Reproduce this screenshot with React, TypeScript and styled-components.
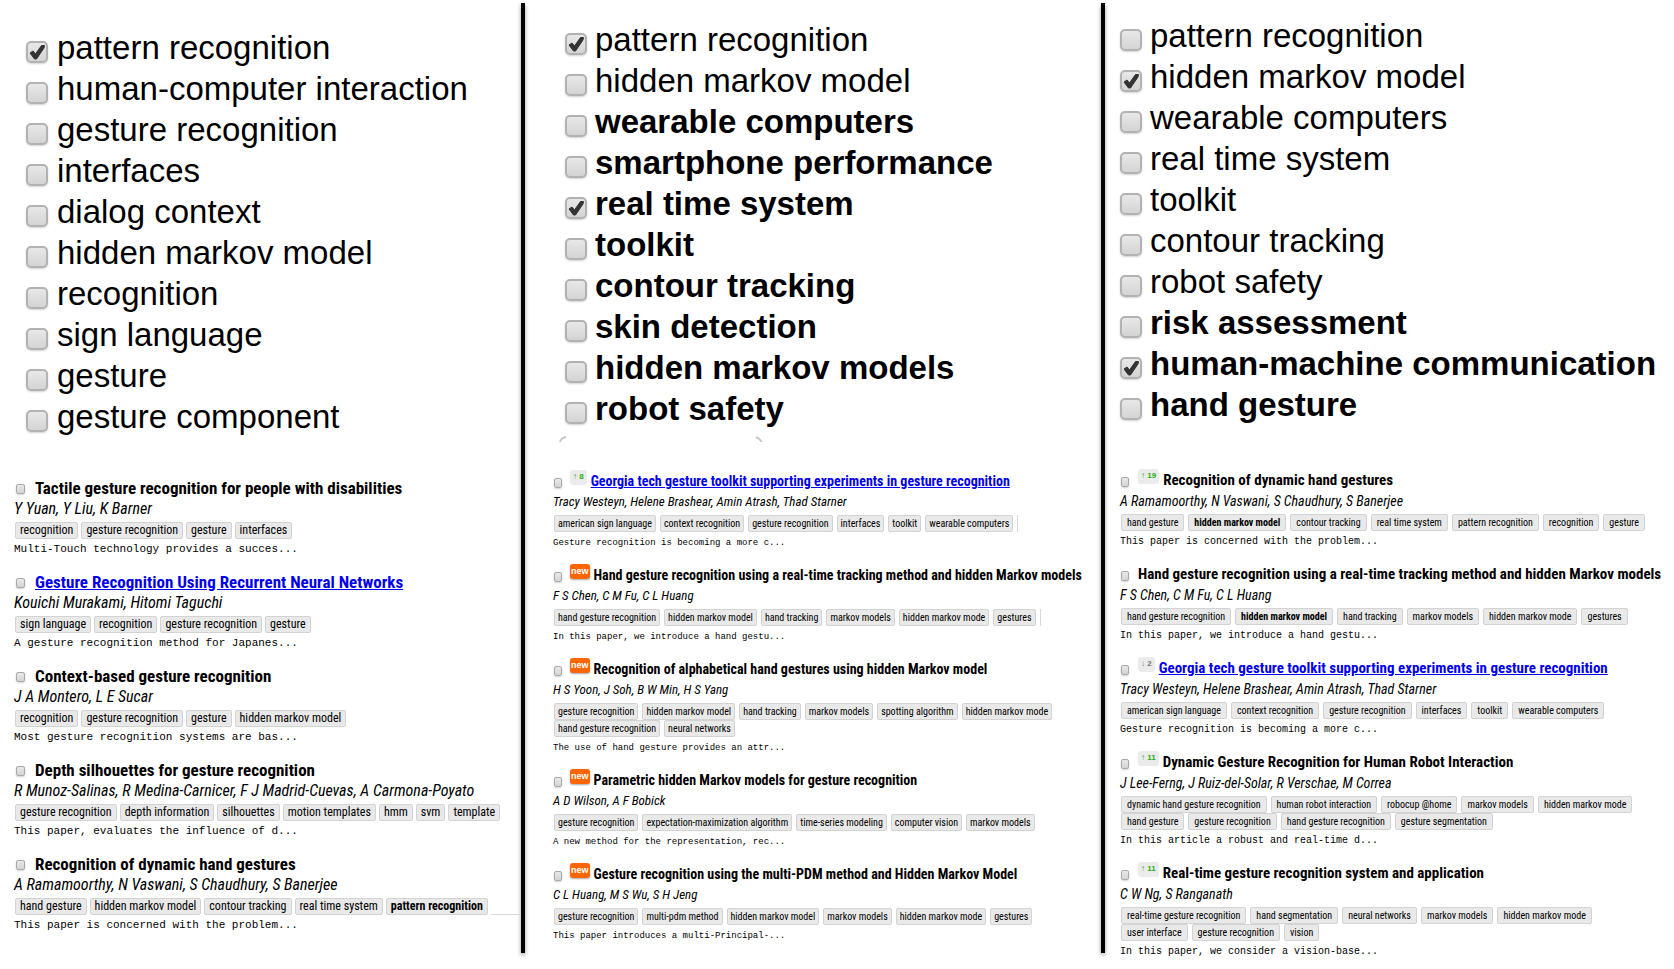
import React, { useId } from 'react';
import styled, { createGlobalStyle } from 'styled-components';

type Size = 's' | 'm' | 'l';
type Badge = { kind: 'new' | 'up' | 'down'; text: string };
type Topic = { name: string; checked?: boolean; fresh?: boolean };
type Paper = {
  title: string;
  link?: boolean;
  badge?: Badge;
  authors: string;
  tags: string[][];
  bold?: string;
  abstract: string;
  tail?: 'tick' | 'rule';
};
type ColumnData = { id: string; size: Size; topics: Topic[]; papers: Paper[]; marks?: boolean };

const metrics = {
  l: { top: 27, listLeft: 26, labelGap: 9, listGap: 39, left: 14, title: 17, titleRow: 23, authors: 16, tag: 12, tagPad: 4, tagGap: 3, mono: 11, monoTop: 1, boxGap: 10, box: 9 },
  s: { top: 19, listLeft: 40, labelGap: 8, listGap: 41, left: 28, title: 14, titleRow: 22, authors: 13, tag: 10, tagPad: 3, tagGap: 4, mono: 9, monoTop: 2, boxGap: 8, box: 8 },
  m: { top: 15, listLeft: 15, labelGap: 8, listGap: 44, left: 15, title: 15, titleRow: 22, authors: 14, tag: 10, tagPad: 5, tagGap: 4, mono: 10, monoTop: 2, boxGap: 9, box: 8 },
};

const GlobalStyle = createGlobalStyle`
  * { box-sizing: border-box; }
  body { margin: 0; background: #fff; color: #000; }
`;

const Page = styled.main`
  display: grid;
  grid-template-columns: minmax(0, 521fr) 4px minmax(0, 576fr) 4px minmax(0, 569fr);
  min-height: 100vh;
  font-family: 'Roboto Condensed', 'Liberation Sans', Arial, sans-serif;
`;

const Divider = styled.div`
  margin: 3px 0 16px;
  background: #000;
  box-shadow: 0 2px 4px rgba(0, 0, 0, 0.4);
`;

const Column = styled.section<{ $size: Size }>`
  position: relative;
  padding-top: ${(p) => metrics[p.$size].top}px;
`;

const TopicList = styled.ul<{ $size: Size }>`
  list-style: none;
  margin: 0;
  padding: 0 0 0 ${(p) => metrics[p.$size].listLeft}px;
  font-family: 'Liberation Sans', Arial, sans-serif;
  font-size: 33px;
  line-height: 41px;
`;

const TopicLabel = styled.label<{ $size: Size; $fresh?: boolean }>`
  display: flex;
  align-items: flex-end;
  gap: ${(p) => metrics[p.$size].labelGap}px;
  white-space: nowrap;
  font-weight: ${(p) => (p.$fresh ? 700 : 400)};
`;

const TickBox = styled.span`
  display: grid;
  width: 22px;
  height: 22px;
  margin-bottom: 5px;
  & > * { grid-area: 1 / 1; }
  & > svg { display: none; pointer-events: none; }
  & > input:checked + svg { display: block; }
`;

const Tick = styled.input<{ $w: number; $h: number }>`
  appearance: none;
  flex: none;
  width: ${(p) => p.$w}px;
  height: ${(p) => p.$h}px;
  margin: 0;
  border: ${(p) => (p.$w > 12 ? 2 : 1)}px solid ${(p) => (p.$w > 12 ? '#b2b2b2' : '#a9a9a9')};
  border-radius: ${(p) => (p.$w > 12 ? 5 : 2)}px;
  background: linear-gradient(#e8e8e8, #d4d4d4);
  box-shadow: 0 1px 2px rgba(0, 0, 0, 0.18);
`;

const SmallTick = styled(Tick)`
  margin-top: 3px;
`;

const Marks = styled.svg`
  position: absolute;
  left: 34px;
  top: 436px;
`;

const PaperList = styled.div<{ $size: Size }>`
  display: flex;
  flex-direction: column;
  gap: 12px;
  margin-top: ${(p) => metrics[p.$size].listGap}px;
  padding-left: ${(p) => metrics[p.$size].left}px;
`;

const TitleRow = styled.div<{ $size: Size }>`
  display: flex;
  align-items: center;
  height: ${(p) => metrics[p.$size].titleRow}px;
  padding-left: ${(p) => (p.$size === 'l' ? 2 : 1)}px;
`;

const Title = styled.h3<{ $size: Size }>`
  margin: 0 0 0 ${(p) => metrics[p.$size].boxGap}px;
  font-size: ${(p) => metrics[p.$size].title}px;
  line-height: 22px;
  font-weight: 700;
  white-space: nowrap;
  display: flex;
`;

const TitleLink = styled.a`
  color: #0000ee;
  text-decoration: underline;
`;

const BadgeBox = styled.span<{ $kind: Badge['kind'] }>`
  height: 15px;
  margin-right: 4px;
  padding: 0 ${(p) => (p.$kind === 'new' ? 1 : 3)}px;
  border-radius: 3px;
  font-family: 'Liberation Sans', Arial, sans-serif;
  font-size: ${(p) => (p.$kind === 'new' ? 9 : 8)}px;
  line-height: 14px;
  font-weight: 700;
  background: ${(p) => (p.$kind === 'new' ? '#ff6600' : '#ebebeb')};
  color: ${(p) => ({ new: '#fff', up: '#27ae10', down: '#777' })[p.$kind]};
  box-shadow: ${(p) => (p.$kind === 'new' ? '0 1px 2px rgba(0, 0, 0, 0.35)' : 'none')};
`;

const Authors = styled.p<{ $size: Size }>`
  margin: 0;
  font-style: italic;
  font-size: ${(p) => metrics[p.$size].authors}px;
  line-height: 20px;
  white-space: nowrap;
`;

const Tags = styled.div`
  margin-top: 3px;
`;

const TagRow = styled.div<{ $size: Size }>`
  display: flex;
  gap: ${(p) => metrics[p.$size].tagGap}px;
  padding-left: 1px;
`;

const Tag = styled.span<{ $size: Size; $bold: boolean }>`
  height: 17px;
  padding: 0 ${(p) => metrics[p.$size].tagPad}px;
  border: 1px solid #d3d3d3;
  border-radius: 2px;
  background: #e9e9e9;
  font-size: ${(p) => metrics[p.$size].tag}px;
  line-height: 15px;
  font-weight: ${(p) => (p.$bold ? 700 : 400)};
  white-space: nowrap;
`;

const TailTick = styled.span`
  border-left: 1px solid #d8d8d8;
`;

const TailRule = styled.span`
  flex: 1;
  border-bottom: 1px solid #d8d8d8;
`;

const Abstract = styled.p<{ $size: Size }>`
  margin: ${(p) => metrics[p.$size].monoTop}px 0 0;
  font-family: 'Liberation Mono', 'Courier New', monospace;
  font-size: ${(p) => metrics[p.$size].mono}px;
  line-height: 18px;
  white-space: nowrap;
`;

const columns: ColumnData[] = [
  {
    id: 'first',
    size: 'l',
    topics: [
      { name: 'pattern recognition', checked: true },
      { name: 'human-computer interaction' },
      { name: 'gesture recognition' },
      { name: 'interfaces' },
      { name: 'dialog context' },
      { name: 'hidden markov model' },
      { name: 'recognition' },
      { name: 'sign language' },
      { name: 'gesture' },
      { name: 'gesture component' },
    ],
    papers: [
      {
        title: 'Tactile gesture recognition for people with disabilities',
        authors: 'Y Yuan, Y Liu, K Barner',
        tags: [['recognition', 'gesture recognition', 'gesture', 'interfaces']],
        abstract: 'Multi-Touch technology provides a succes...',
      },
      {
        title: 'Gesture Recognition Using Recurrent Neural Networks',
        link: true,
        authors: 'Kouichi Murakami, Hitomi Taguchi',
        tags: [['sign language', 'recognition', 'gesture recognition', 'gesture']],
        abstract: 'A gesture recognition method for Japanes...',
      },
      {
        title: 'Context-based gesture recognition',
        authors: 'J A Montero, L E Sucar',
        tags: [['recognition', 'gesture recognition', 'gesture', 'hidden markov model']],
        abstract: 'Most gesture recognition systems are bas...',
      },
      {
        title: 'Depth silhouettes for gesture recognition',
        authors: 'R Munoz-Salinas, R Medina-Carnicer, F J Madrid-Cuevas, A Carmona-Poyato',
        tags: [['gesture recognition', 'depth information', 'silhouettes', 'motion templates', 'hmm', 'svm', 'template']],
        abstract: 'This paper, evaluates the influence of d...',
      },
      {
        title: 'Recognition of dynamic hand gestures',
        authors: 'A Ramamoorthy, N Vaswani, S Chaudhury, S Banerjee',
        tags: [['hand gesture', 'hidden markov model', 'contour tracking', 'real time system', 'pattern recognition']],
        bold: 'pattern recognition',
        abstract: 'This paper is concerned with the problem...',
        tail: 'rule',
      },
    ],
  },
  {
    id: 'second',
    size: 's',
    marks: true,
    topics: [
      { name: 'pattern recognition', checked: true },
      { name: 'hidden markov model' },
      { name: 'wearable computers', fresh: true },
      { name: 'smartphone performance', fresh: true },
      { name: 'real time system', fresh: true, checked: true },
      { name: 'toolkit', fresh: true },
      { name: 'contour tracking', fresh: true },
      { name: 'skin detection', fresh: true },
      { name: 'hidden markov models', fresh: true },
      { name: 'robot safety', fresh: true },
    ],
    papers: [
      {
        title: 'Georgia tech gesture toolkit supporting experiments in gesture recognition',
        link: true,
        badge: { kind: 'up', text: '↑ 8' },
        authors: 'Tracy Westeyn, Helene Brashear, Amin Atrash, Thad Starner',
        tags: [['american sign language', 'context recognition', 'gesture recognition', 'interfaces', 'toolkit', 'wearable computers']],
        abstract: 'Gesture recognition is becoming a more c...',
        tail: 'tick',
      },
      {
        title: 'Hand gesture recognition using a real-time tracking method and hidden Markov models',
        badge: { kind: 'new', text: 'new' },
        authors: 'F S Chen, C M Fu, C L Huang',
        tags: [['hand gesture recognition', 'hidden markov model', 'hand tracking', 'markov models', 'hidden markov mode', 'gestures']],
        abstract: 'In this paper, we introduce a hand gestu...',
        tail: 'tick',
      },
      {
        title: 'Recognition of alphabetical hand gestures using hidden Markov model',
        badge: { kind: 'new', text: 'new' },
        authors: 'H S Yoon, J Soh, B W Min, H S Yang',
        tags: [
          ['gesture recognition', 'hidden markov model', 'hand tracking', 'markov models', 'spotting algorithm', 'hidden markov mode'],
          ['hand gesture recognition', 'neural networks'],
        ],
        abstract: 'The use of hand gesture provides an attr...',
      },
      {
        title: 'Parametric hidden Markov models for gesture recognition',
        badge: { kind: 'new', text: 'new' },
        authors: 'A D Wilson, A F Bobick',
        tags: [['gesture recognition', 'expectation-maximization algorithm', 'time-series modeling', 'computer vision', 'markov models']],
        abstract: 'A new method for the representation, rec...',
      },
      {
        title: 'Gesture recognition using the multi-PDM method and Hidden Markov Model',
        badge: { kind: 'new', text: 'new' },
        authors: 'C L Huang, M S Wu, S H Jeng',
        tags: [['gesture recognition', 'multi-pdm method', 'hidden markov model', 'markov models', 'hidden markov mode', 'gestures']],
        abstract: 'This paper introduces a multi-Principal-...',
      },
    ],
  },
  {
    id: 'third',
    size: 'm',
    topics: [
      { name: 'pattern recognition' },
      { name: 'hidden markov model', checked: true },
      { name: 'wearable computers' },
      { name: 'real time system' },
      { name: 'toolkit' },
      { name: 'contour tracking' },
      { name: 'robot safety' },
      { name: 'risk assessment', fresh: true },
      { name: 'human-machine communication', fresh: true, checked: true },
      { name: 'hand gesture', fresh: true },
    ],
    papers: [
      {
        title: 'Recognition of dynamic hand gestures',
        badge: { kind: 'up', text: '↑ 19' },
        authors: 'A Ramamoorthy, N Vaswani, S Chaudhury, S Banerjee',
        tags: [['hand gesture', 'hidden markov model', 'contour tracking', 'real time system', 'pattern recognition', 'recognition', 'gesture']],
        bold: 'hidden markov model',
        abstract: 'This paper is concerned with the problem...',
      },
      {
        title: 'Hand gesture recognition using a real-time tracking method and hidden Markov models',
        authors: 'F S Chen, C M Fu, C L Huang',
        tags: [['hand gesture recognition', 'hidden markov model', 'hand tracking', 'markov models', 'hidden markov mode', 'gestures']],
        bold: 'hidden markov model',
        abstract: 'In this paper, we introduce a hand gestu...',
      },
      {
        title: 'Georgia tech gesture toolkit supporting experiments in gesture recognition',
        link: true,
        badge: { kind: 'down', text: '↓ 2' },
        authors: 'Tracy Westeyn, Helene Brashear, Amin Atrash, Thad Starner',
        tags: [['american sign language', 'context recognition', 'gesture recognition', 'interfaces', 'toolkit', 'wearable computers']],
        abstract: 'Gesture recognition is becoming a more c...',
      },
      {
        title: 'Dynamic Gesture Recognition for Human Robot Interaction',
        badge: { kind: 'up', text: '↑ 11' },
        authors: 'J Lee-Ferng, J Ruiz-del-Solar, R Verschae, M Correa',
        tags: [
          ['dynamic hand gesture recognition', 'human robot interaction', 'robocup @home', 'markov models', 'hidden markov mode'],
          ['hand gesture', 'gesture recognition', 'hand gesture recognition', 'gesture segmentation'],
        ],
        abstract: 'In this article a robust and real-time d...',
      },
      {
        title: 'Real-time gesture recognition system and application',
        badge: { kind: 'up', text: '↑ 11' },
        authors: 'C W Ng, S Ranganath',
        tags: [
          ['real-time gesture recognition', 'hand segmentation', 'neural networks', 'markov models', 'hidden markov mode'],
          ['user interface', 'gesture recognition', 'vision'],
        ],
        abstract: 'In this paper, we consider a vision-base...',
      },
    ],
  },
];

function TopicItem({ topic, size }: { topic: Topic; size: Size }) {
  return (
    <li>
      <TopicLabel $size={size} $fresh={topic.fresh}>
        <TickBox>
          <Tick type="checkbox" $w={22} $h={22} defaultChecked={topic.checked} />
          <svg width="22" height="22" viewBox="0 0 22 22" aria-hidden="true">
            <path d="M4 12 L7 10 L9.5 13 L15.5 4.5 L18.5 4.5 L18 7 L10.5 18 L8.5 18 Z" fill="#333" stroke="#333" strokeLinejoin="round" />
          </svg>
        </TickBox>
        {topic.name}
      </TopicLabel>
    </li>
  );
}

function PaperItem({ paper, size }: { paper: Paper; size: Size }) {
  const id = useId();
  const last = paper.tags.length - 1;
  return (
    <article>
      <TitleRow $size={size}>
        <SmallTick type="checkbox" id={id} aria-label={paper.title} $w={metrics[size].box} $h={10} />
        <Title $size={size}>
          {paper.badge && <BadgeBox $kind={paper.badge.kind}>{paper.badge.text}</BadgeBox>}
          {paper.link ? <TitleLink href="#">{paper.title}</TitleLink> : <label htmlFor={id}>{paper.title}</label>}
        </Title>
      </TitleRow>
      <Authors $size={size}>{paper.authors}</Authors>
      <Tags>
        {paper.tags.map((row, i) => (
          <TagRow key={i} $size={size}>
            {row.map((tag) => (
              <Tag key={tag} $size={size} $bold={tag === paper.bold}>{tag}</Tag>
            ))}
            {i === last && paper.tail === 'tick' && <TailTick />}
            {i === last && paper.tail === 'rule' && <TailRule />}
          </TagRow>
        ))}
      </Tags>
      <Abstract $size={size}>{paper.abstract}</Abstract>
    </article>
  );
}

export default function App() {
  return (
    <>
      <GlobalStyle />
      <Page>
        {columns.map((col, i) => (
          <React.Fragment key={col.id}>
            {i > 0 && <Divider />}
            <Column $size={col.size}>
              <TopicList $size={col.size}>
                {col.topics.map((t) => <TopicItem key={t.name} topic={t} size={col.size} />)}
              </TopicList>
              {col.marks && (
                <Marks width="204" height="6" viewBox="0 0 204 6" aria-hidden="true">
                  <path d="M1 6 Q2 2 7 1 M197 1 Q200 2 203 6" fill="none" stroke="#c8c8c8" strokeWidth="2" />
                </Marks>
              )}
              <PaperList $size={col.size}>
                {col.papers.map((p) => <PaperItem key={p.title} paper={p} size={col.size} />)}
              </PaperList>
            </Column>
          </React.Fragment>
        ))}
      </Page>
    </>
  );
}
